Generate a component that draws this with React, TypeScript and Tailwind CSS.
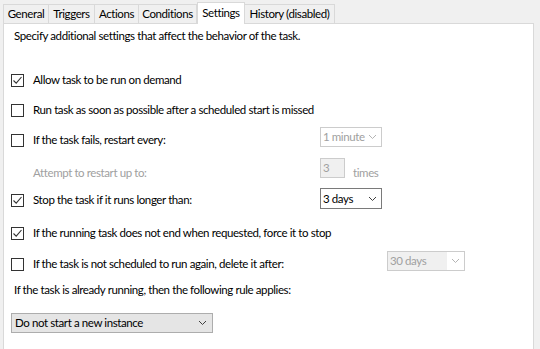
const Chevron = ({ disabled }: { disabled?: boolean }) => (
  <svg width="9" height="6" viewBox="0 0 9 6" className="shrink-0">
    <path
      d="M1 1 L4.5 4.5 L8 1"
      fill="none"
      stroke={disabled ? '#b4b4b4' : '#404040'}
      strokeWidth="1"
    />
  </svg>
);

const CheckBox = ({ checked }: { checked?: boolean }) => (
  <div className="w-[13px] h-[13px] border border-[#333333] bg-white shrink-0 flex items-center justify-center">
    {checked && (
      <svg width="11" height="11" viewBox="0 0 11 11">
        <path d="M1.5 5.5 L4.2 8.2 L9.5 2" fill="none" stroke="#333333" strokeWidth="1.1" />
      </svg>
    )}
  </div>
);

const Combo = ({
  value,
  width,
  disabled,
  greyField,
  className = '',
}: {
  value: string;
  width: string;
  disabled?: boolean;
  greyField?: boolean;
  className?: string;
}) => (
  <div
    className={`${width} ${className} h-[20px] flex items-stretch border bg-white whitespace-nowrap ${
      disabled ? 'border-[#cccccc] text-[#a0a0a0]' : 'border-[#7a7a7a] text-black'
    }`}
  >
    <div className={`flex-1 flex items-center pl-[2px] ${greyField ? 'bg-[#f0f0f0]' : ''}`}>{value}</div>
    <div className="w-[17px] flex items-center justify-center">
      <Chevron disabled={disabled} />
    </div>
  </div>
);

const tabs = [
  { label: 'General', w: 'w-[46px]' },
  { label: 'Triggers', w: 'w-[47px]' },
  { label: 'Actions', w: 'w-[45px]' },
  { label: 'Conditions', w: 'w-[59px]' },
  { label: 'Settings', w: 'w-[48px]', active: true },
  { label: 'History (disabled)', w: 'w-[91px]' },
];

const App = () => {
  return (
    <div className="w-[540px] h-[349px] overflow-hidden bg-[#f0f0f0] pt-[2px] pl-[3px] pr-[6px] font-['Segoe_UI',Lato,'Liberation_Sans',sans-serif] text-[11.5px] tracking-[-0.4px] text-black leading-none whitespace-nowrap">
      {/* Tab strip */}
      <div className="flex items-end h-[21px]">
        {tabs.map((t) =>
          t.active ? (
            <div
              key={t.label}
              className={`${t.w} h-[22px] -mb-px relative z-10 bg-white border border-b-0 border-[#d9d9d9] flex items-center justify-center pb-[2px]`}
            >
              {t.label}
            </div>
          ) : (
            <div
              key={t.label}
              className={`${t.w} h-[19px] -ml-px first:ml-0 bg-[#f0f0f0] border border-b-0 border-[#d9d9d9] flex items-center justify-center`}
            >
              {t.label}
            </div>
          )
        )}
      </div>

      {/* Panel */}
      <div className="h-[340px] bg-white border border-[#d9d9d9] flex flex-col">
        <div className="mt-[4px] h-[16px] flex items-center pl-[10px]">
          Specify additional settings that affect the behavior of the task.
        </div>

        <div className="mt-[28px] h-[16px] flex items-center pl-[7px] gap-[9px]">
          <CheckBox checked />
          <span>Allow task to be run on demand</span>
        </div>

        <div className="mt-[14px] h-[16px] flex items-center pl-[7px] gap-[9px]">
          <CheckBox />
          <span>Run task as soon as possible after a scheduled start is missed</span>
        </div>

        <div className="mt-[12px] h-[20px] flex items-center">
          <div className="w-[316px] flex items-center pl-[7px] gap-[9px]">
            <CheckBox />
            <span>If the task fails, restart every:</span>
          </div>
          <Combo value="1 minute" width="w-[62px]" disabled className="mb-[6px]" />
        </div>

        <div className="mt-[13px] h-[20px] flex items-center">
          <div className="w-[316px] pl-[29px] text-[#a0a0a0]">Attempt to restart up to:</div>
          <div className="w-[25px] h-[20px] mb-[10px] border border-[#cccccc] bg-[#f0f0f0] text-[#a0a0a0] flex items-center pl-[2px]">
            3
          </div>
          <span className="ml-[8px] text-[#a0a0a0]">times</span>
        </div>

        <div className="mt-[7px] h-[20px] flex items-center">
          <div className="w-[316px] flex items-center pl-[7px] gap-[9px]">
            <CheckBox checked />
            <span>Stop the task if it runs longer than:</span>
          </div>
          <Combo value="3 days" width="w-[62px]" className="h-[21px] mb-[3px]" />
        </div>

        <div className="mt-[15px] h-[16px] flex items-center pl-[7px] gap-[9px]">
          <CheckBox checked />
          <span>If the running task does not end when requested, force it to stop</span>
        </div>

        <div className="mt-[13px] h-[20px] flex items-center">
          <div className="w-[383px] flex items-center pl-[7px] gap-[9px]">
            <CheckBox />
            <span>If the task is not scheduled to run again, delete it after:</span>
          </div>
          <Combo value="30 days" width="w-[78px]" disabled greyField className="mb-[7px]" />
        </div>

        <div className="mt-[8px] h-[16px] flex items-center pl-[10px]">
          If the task is already running, then the following rule applies:
        </div>

        <div className="mt-[15px] pl-[7px]">
          <div className="w-[202px] h-[20px] bg-[#e5e5e5] border border-[#adadad] flex items-center justify-between pl-[3px] pr-[5px]">
            <span>Do not start a new instance</span>
            <Chevron />
          </div>
        </div>
      </div>
    </div>
  );
};

export default App;
